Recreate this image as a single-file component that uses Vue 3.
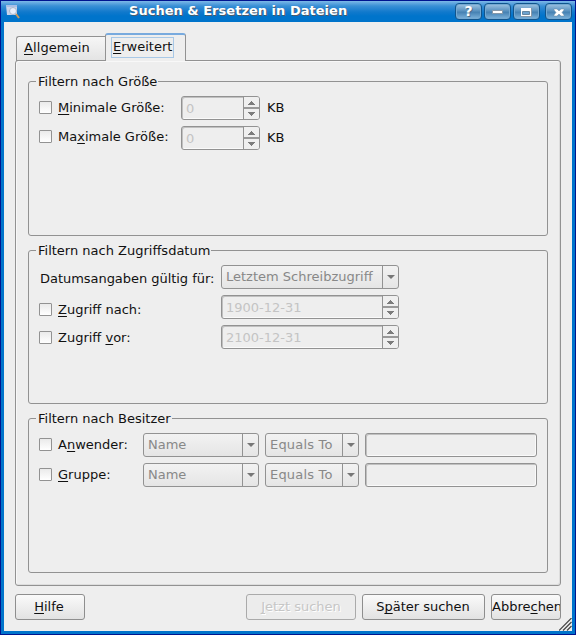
<script setup>
const owners = [
  { id: 'user', pre: 'A', key: 'n', post: 'wender:' },
  { id: 'group', pre: '', key: 'G', post: 'ruppe:' },
]
const sizes = [
  { id: 'min', pre: '', key: 'M', post: 'inimale Größe:' },
  { id: 'max', pre: 'Ma', key: 'x', post: 'imale Größe:' },
]
const dates = [
  { id: 'after', pre: '', key: 'Z', post: 'ugriff nach:', value: '1900-12-31' },
  { id: 'before', pre: 'Zugriff ', key: 'v', post: 'or:', value: '2100-12-31' },
]
</script>

<template>
  <div class="window">
    <header class="titlebar">
      <svg class="app-icon" width="16" height="16" viewBox="0 0 16 16">
        <path d="M1 2h11v10H2z" fill="#c9d3ea" />
        <path d="M1 2h11v2H1z" fill="#a9bfe6" />
        <circle cx="8" cy="8" r="3.500" fill="#e8eefb" stroke="#aab6cb" />
        <path d="M11 11l3 4" stroke="#c99a5e" stroke-width="2" />
      </svg>
      <h1>Suchen &amp; Ersetzen in Dateien</h1>
      <div class="window-buttons">
        <span class="wb">?</span>
        <span class="wb">
          <svg width="27" height="16" viewBox="0 0 27 16"><path d="M8.500 6.500h10v3h-10z" fill="#fff" stroke="#8798a8" /></svg>
        </span>
        <span class="wb">
          <svg width="27" height="16" viewBox="0 0 27 16"><path d="M8 4h11v9H8z" fill="#8798a8" /><path d="M8 4h10v8H8z" fill="#fff" /><path d="M9.500 7.500h7v3h-7z" fill="#6da3cf" stroke="#6686a0" /></svg>
        </span>
        <span class="wb last">
          <svg width="27" height="16" viewBox="0 0 27 16"><path d="M9 5h3l2 2 2-2h3v1l-2 2.500 2 2.500v1h-3l-2-2-2 2H9v-1l2-2.500L9 6z" fill="#fff" stroke="#6f8ca5" stroke-width=".5" /></svg>
        </span>
      </div>
    </header>

    <main class="body">
      <nav class="tabs">
        <div class="tab"><span><u>A</u>llgemein</span></div>
        <div class="tab active"><span class="focus"><u>E</u>rweitert</span></div>
      </nav>

      <section class="panel">
        <section class="group">
          <h2>Filtern nach Größe</h2>
          <div v-for="s in sizes" :key="s.id" class="row">
            <label class="check size" :class="s.id"><i class="box"></i><span>{{ s.pre }}<u>{{ s.key }}</u>{{ s.post }}</span></label>
            <div class="spin small">
              <span class="value">0</span>
              <span class="steps"><svg width="15" height="22" viewBox="0 0 15 22" shape-rendering="crispEdges"><path d="M0 10h15v2H0z" fill="#999" /><path d="M7 4h1v1h1v1h1v1h1v1H4V7h1V6h1V5h1zM4 15h7v1h-1v1H9v1H8v1H7v-1H6v-1H5v-1H4z" fill="#7c7c7c" /></svg></span>
            </div>
            <span class="unit">KB</span>
          </div>
        </section>

        <section class="group middle">
          <h2>Filtern nach Zugriffsdatum</h2>
          <div class="row">
            <span class="caption">Datumsangaben gültig für:</span>
            <div class="combo wide"><span class="value">Letztem Schreibzugriff</span><span class="drop"><i></i></span></div>
          </div>
          <div v-for="d in dates" :key="d.id" class="row">
            <label class="check date" :class="d.id"><i class="box"></i><span>{{ d.pre }}<u>{{ d.key }}</u>{{ d.post }}</span></label>
            <div class="spin wide">
              <span class="value">{{ d.value }}</span>
              <span class="steps"><svg width="15" height="22" viewBox="0 0 15 22" shape-rendering="crispEdges"><path d="M0 10h15v2H0z" fill="#999" /><path d="M7 4h1v1h1v1h1v1h1v1H4V7h1V6h1V5h1zM4 15h7v1h-1v1H9v1H8v1H7v-1H6v-1H5v-1H4z" fill="#7c7c7c" /></svg></span>
            </div>
          </div>
        </section>

        <section class="group">
          <h2>Filtern nach Besitzer</h2>
          <div v-for="o in owners" :key="o.id" class="row">
            <label class="check owner"><i class="box"></i><span>{{ o.pre }}<u>{{ o.key }}</u>{{ o.post }}</span></label>
            <div class="combo name"><span class="value">Name</span><span class="drop"><i></i></span></div>
            <div class="combo equals"><span class="value">Equals To</span><span class="drop"><i></i></span></div>
            <div class="edit"></div>
          </div>
        </section>
      </section>

      <footer class="actions">
        <button class="btn help" type="button"><u>H</u>ilfe</button>
        <button class="btn now" type="button" disabled><u>J</u>etzt suchen</button>
        <button class="btn later" type="button">S<u>p</u>äter suchen</button>
        <button class="btn cancel" type="button">Abbre<u>c</u>hen</button>
      </footer>
      <svg class="grip" width="13" height="13" viewBox="0 0 13 13"><path d="M0 12.500L12.500 0M4 12.500L12.500 4M8 12.500L12.500 8" stroke="#444" stroke-width="1.200" /></svg>
    </main>
  </div>
</template>

<style>
body {
  margin: 0;
  overflow: hidden;
}
</style>

<style scoped>
* {
  box-sizing: border-box;
}
.window {
  display: flex;
  flex-direction: column;
  width: 576px;
  height: 635px;
  border: 1px solid #00148f;
  background: #0074cb;
  font: 13px/16px "DejaVu Sans", sans-serif;
  color: #111;
  white-space: nowrap;
}
u {
  text-decoration-thickness: 1px;
  text-underline-offset: 2px;
  text-decoration-skip-ink: none;
}
.titlebar {
  display: flex;
  height: 21px;
  background: linear-gradient(#7db8e8 0, #398fd5 5px, #1179cc 11px, #0074cb 15px);
}
.app-icon {
  margin: 2px 0 0 4px;
}
h1 {
  width: 218px;
  margin: 1px 0 0 108px;
  font-size: 13px;
  line-height: 17px;
  font-weight: bold;
  letter-spacing: 0.02px;
  color: #fff;
  text-shadow: 1px 1px 0 #4c5c6c;
}
.window-buttons {
  display: flex;
  gap: 2px;
  margin: 2px 0 0 108px;
}
.wb {
  width: 27px;
  height: 17px;
  border: 1px solid #10548c;
  border-radius: 4px;
  background: linear-gradient(#9fc4e2, #5b93c0 45%, #4682b3 55%, #7fb4dc);
  box-shadow: inset 0 0 0 1px #74a9d2;
  color: #fff;
  font-weight: bold;
  font-size: 14px;
  line-height: 15px;
  text-align: center;
  text-shadow: 1px 1px 0 #51708a;
}
.wb svg {
  display: block;
  margin: 0 -1px -1px;
}
.wb.last {
  margin-left: 3px;
}
.body {
  position: relative;
  display: flex;
  flex-direction: column;
  flex: 1;
  margin: 0 3px 3px;
  padding: 11px 11px 0;
  background: #eee;
}
.tabs {
  position: relative;
  display: flex;
  align-items: flex-end;
  height: 28px;
  margin-bottom: -1px;
}
.tab {
  width: 90px;
  height: 25px;
  margin-left: 1px;
  padding: 3px 0 0 7px;
  border: 1px solid #929292;
  border-right: 0;
  border-radius: 3px 0 0 0;
  background: linear-gradient(#f6f6f6, #e4e4e4);
  letter-spacing: 0.1px;
}
.tab.active {
  width: 81px;
  height: 28px;
  margin-left: -1px;
  padding: 2px 0 0 5px;
  border: 1px solid #929292;
  border-top: 2px solid #78aade;
  border-bottom: 0;
  border-radius: 3px 3px 0 0;
  background: #eee;
  letter-spacing: 0;
}
.focus {
  display: block;
  width: 63px;
  height: 21px;
  padding: 1px 0 0 1px;
  border: 1px solid #a8c8e6;
}
.panel {
  display: flex;
  flex-direction: column;
  gap: 14px;
  width: 546px;
  height: 526px;
  padding: 20px 12px 0;
  border: 1px solid #929292;
  border-radius: 3px;
  box-shadow: inset 1px 1px 0 #f8f8f8, inset -1px -1px 0 #ddd;
}
.group {
  width: 520px;
  height: 155px;
  border: 1px solid #929292;
  border-radius: 3px;
}
.group.middle {
  height: 154px;
}
h2 {
  width: max-content;
  height: 18px;
  margin: -10px 0 6px 7px;
  padding: 2px 1px 0 2px;
  background: #eee;
  font: inherit;
}
.row {
  display: flex;
  align-items: center;
  height: 24px;
  margin-bottom: 6px;
  padding-left: 10px;
}
.check {
  display: flex;
  align-items: center;
  gap: 6px;
  height: 24px;
}
.check.size {
  width: 142px;
  margin-top: -1px;
}
.check.size.max {
  margin-top: -3px;
}
.check.date {
  width: 182px;
}
.check.date span {
  padding-top: 2px;
}
.check.after {
  margin-top: 4px;
}
.check.owner {
  width: 104px;
  margin-top: -1px;
}
.box {
  width: 13px;
  height: 13px;
  border: 1px solid #929292;
  border-radius: 1px;
  background: linear-gradient(#eaeaea, #fff);
}
.caption {
  width: 181px;
  margin: 3px 0 0 1px;
  letter-spacing: -0.04px;
}
.spin,
.combo,
.edit {
  display: flex;
  height: 24px;
  border: 1px solid #929292;
  border-radius: 3px;
}
.spin,
.edit {
  box-shadow: inset 1px 1px 0 #c0c0c0, inset -1px -1px 0 #fafafa;
}
.spin .value {
  flex: 1;
  padding: 4px 0 0 4px;
  color: #c4c4c4;
}
.combo {
  background: linear-gradient(#f2f2f2, #e5e5e5);
}
.combo .value {
  flex: 1;
  padding: 3px 0 0 4px;
  color: #888;
}
.steps {
  width: 16px;
  border-left: 1px solid #929292;
  background: #efefef;
  border-radius: 0 2px 2px 0;
}
.steps svg {
  display: block;
}
.small {
  width: 79px;
}
.wide {
  width: 178px;
}
.name {
  width: 116px;
  margin-right: 6px;
}
.equals {
  width: 94px;
  margin-right: 6px;
  letter-spacing: 0.2px;
}
.edit {
  width: 172px;
}
.drop {
  display: flex;
  align-items: center;
  justify-content: center;
  width: 16px;
  border-left: 1px solid #929292;
}
.drop i {
  border: 4px solid transparent;
  border-top-color: #777;
  border-bottom: 0;
}
.unit {
  margin: 0 0 0 7px;
}
.actions {
  display: flex;
  gap: 6px;
  margin-top: 8px;
}
.btn {
  height: 26px;
  padding: 0 0 1px;
  border: 1px solid #8e8e8e;
  border-radius: 3px;
  background: linear-gradient(#fafafa, #e2e2e2);
  font: inherit;
  color: #111;
  overflow: hidden;
}
.help {
  width: 70px;
  margin-right: 155px;
  padding-right: 2px;
}
.now {
  width: 110px;
  border-color: #aaa;
  background: #ececec;
  color: #c6c6c6;
  text-shadow: 1px 1px 0 #fff;
}
.later {
  width: 123px;
  padding-right: 1px;
}
.cancel {
  width: 70px;
  text-align: left;
}
.grip {
  position: absolute;
  right: 0;
  bottom: 0;
}
</style>
